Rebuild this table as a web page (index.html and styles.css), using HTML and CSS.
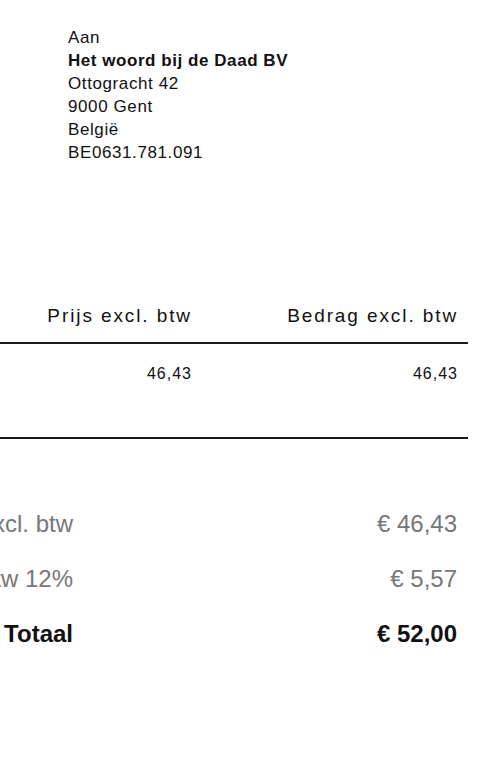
FILE: index.html
```html
<!DOCTYPE html>
<html lang="nl">
<head>
<meta charset="utf-8">
<title>Factuur</title>
<link rel="stylesheet" href="styles.css">
</head>
<body>
<div class="sheet">
  <div class="address">
    <div>Aan</div>
    <div class="strong">Het woord bij de Daad BV</div>
    <div>Ottogracht 42</div>
    <div>9000 Gent</div>
    <div>België</div>
    <div>BE0631.781.091</div>
  </div>

  <div class="items">
    <div class="items-row items-head">
      <div class="cell desc">Omschrijving</div>
      <div class="cell num">Prijs excl. btw</div>
      <div class="cell num last">Bedrag excl. btw</div>
    </div>
    <div class="items-row items-body">
      <div class="cell desc">Product</div>
      <div class="cell num">46,43</div>
      <div class="cell num last">46,43</div>
    </div>
  </div>

  <div class="totals">
    <div class="total-row">
      <div class="t-label">Subtotaal excl. btw</div>
      <div class="t-value">€ 46,43</div>
    </div>
    <div class="total-row">
      <div class="t-label">Btw 12%</div>
      <div class="t-value">€ 5,57</div>
    </div>
    <div class="total-row grand">
      <div class="t-label">Totaal</div>
      <div class="t-value">€ 52,00</div>
    </div>
  </div>
</div>
</body>
</html>
```
FILE: styles.css
```css
html, body {
  margin: 0;
  padding: 0;
  background: #fff;
}
body {
  font-family: "Liberation Sans", Arial, sans-serif;
  color: #111;
  overflow: hidden;
}
.sheet {
  margin-left: -300px;
  width: 768px;
}
.address {
  margin-left: 368px;
  padding-top: 26px;
  font-size: 17px;
  line-height: 23px;
  letter-spacing: 0.6px;
}
.strong {
  font-weight: bold;
  letter-spacing: 0.55px;
}
.items {
  margin-top: 140px;
}
.items-row {
  display: grid;
  grid-template-columns: 300px 190px 278px;
}
.items-head {
  font-size: 19px;
  line-height: 24px;
  letter-spacing: 1.9px;
  padding-bottom: 14px;
  border-bottom: 2px solid #1a1a1a;
}
.items-body {
  font-size: 16px;
  line-height: 20px;
  letter-spacing: 1px;
  padding-top: 20px;
  padding-bottom: 53px;
  border-bottom: 2px solid #1a1a1a;
}
.cell.num {
  text-align: right;
  margin-right: -2px;
}
.cell.num.last {
  margin-right: 10px;
}
.desc {
  visibility: hidden;
}
.totals {
  margin-top: 57px;
}
.total-row {
  display: grid;
  grid-template-columns: 373px 384px;
  font-size: 24px;
  line-height: 55px;
  color: #777;
}
.t-label,
.t-value {
  text-align: right;
}
.grand {
  color: #111;
  font-weight: bold;
}
```
